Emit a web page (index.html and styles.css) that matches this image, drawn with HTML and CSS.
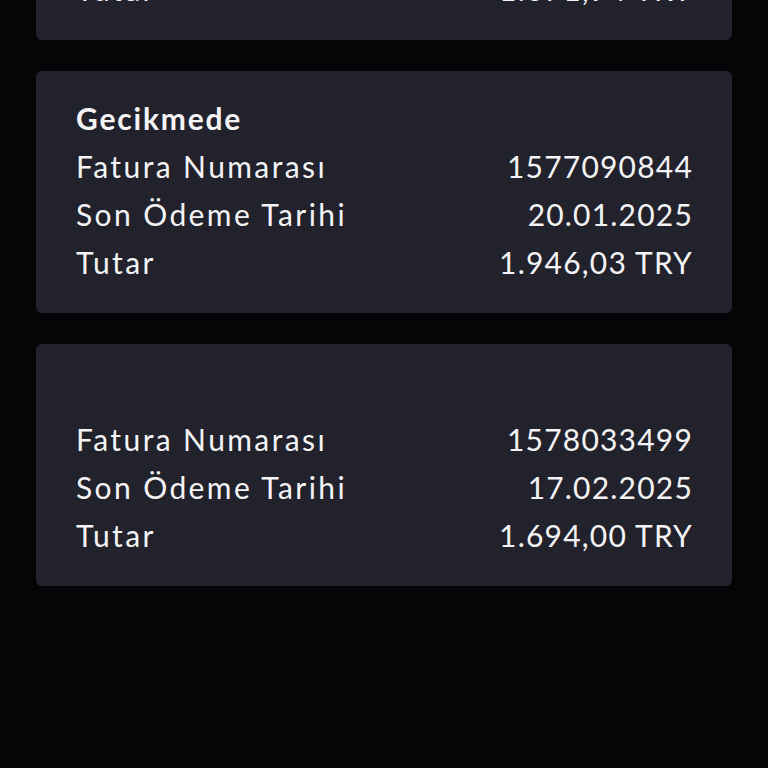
FILE: index.html
```html
<!DOCTYPE html>
<html lang="tr">
  <head>
    <meta charset="UTF-8" />
    <meta name="viewport" content="width=device-width, initial-scale=1.0" />
    <title>Faturalar</title>
    <link rel="stylesheet" href="styles.css">
  </head>

  <body>
    <div class="lista-faturas">
      <div class="tarjeta-factura">
        <div class="estado"></div>
        <div class="fila"><span>Fatura Numarası</span><span class="valor">1576123057</span></div>
        <div class="fila"><span>Son Ödeme Tarihi</span><span class="valor">19.12.2024</span></div>
        <div class="fila"><span>Tutar</span><span class="valor">1.871,94 TRY</span></div>
      </div>

      <div class="tarjeta-factura">
        <div class="estado">Gecikmede</div>
        <div class="fila"><span>Fatura Numarası</span><span class="valor">1577090844</span></div>
        <div class="fila"><span>Son Ödeme Tarihi</span><span class="valor">20.01.2025</span></div>
        <div class="fila"><span>Tutar</span><span class="valor">1.946,03 TRY</span></div>
      </div>

      <div class="tarjeta-factura">
        <div class="estado"></div>
        <div class="fila"><span>Fatura Numarası</span><span class="valor">1578033499</span></div>
        <div class="fila"><span>Son Ödeme Tarihi</span><span class="valor">17.02.2025</span></div>
        <div class="fila"><span>Tutar</span><span class="valor">1.694,00 TRY</span></div>
      </div>
    </div>
  </body>
</html>
```

FILE: styles.css
```css
body {
  margin: 0;
  background-color: #050508;
  font-family: Lato, "Liberation Sans", sans-serif;
  color: #f4f4f6;
  height: 768px;
  overflow: hidden;
}

.lista-faturas {
  display: flex;
  flex-direction: column;
  gap: 31px;
  padding: 0 36px 0 36px;
  margin-top: -202px;
}

.tarjeta-factura {
  background-color: #22222c;
  border-radius: 6px;
  padding: 23px 40px 27px 40px;
}

.estado {
  height: 48px;
  line-height: 48px;
  font-size: 30px;
  font-weight: 700;
  letter-spacing: 1.8px;
}

.fila {
  display: flex;
  justify-content: space-between;
  height: 48px;
  line-height: 48px;
  font-size: 30px;
  letter-spacing: 2.4px;
}

.valor {
  letter-spacing: 1.2px;
  margin-right: -1px;
}
```
